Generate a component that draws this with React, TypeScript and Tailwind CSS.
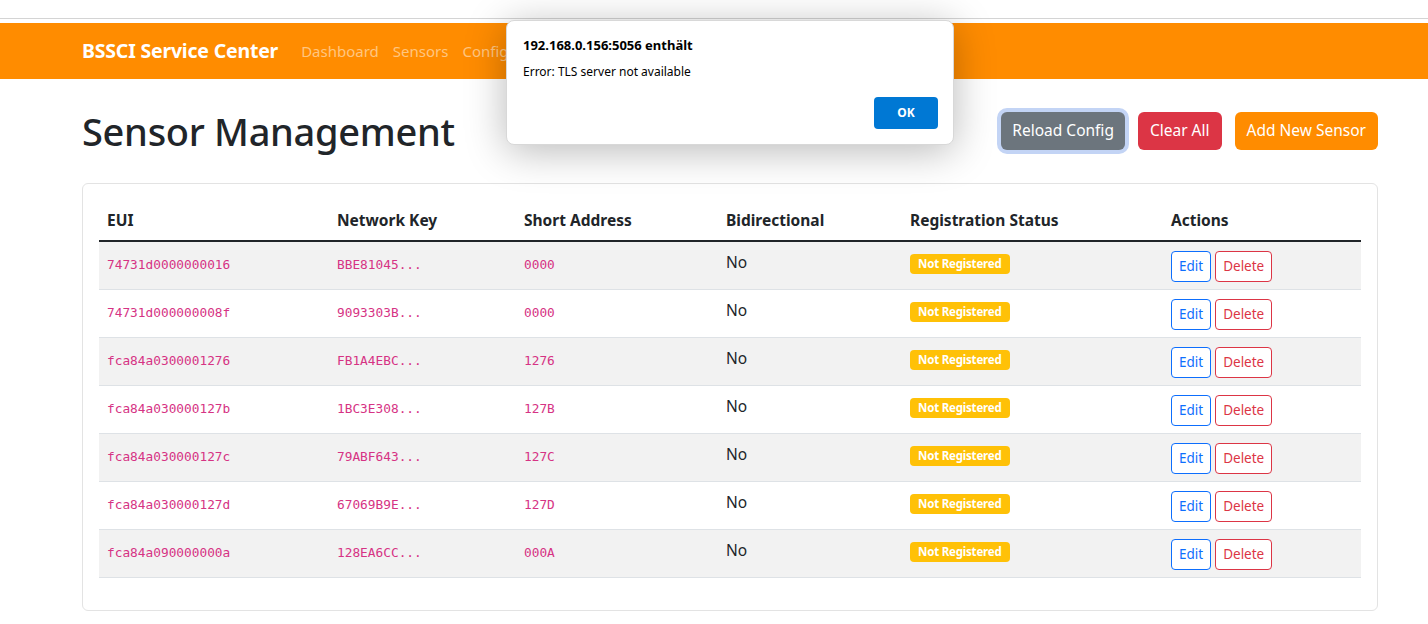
import React from "react";

const rows = [
  ["74731d0000000016", "BBE81045...", "0000"],
  ["74731d000000008f", "9093303B...", "0000"],
  ["fca84a0300001276", "FB1A4EBC...", "1276"],
  ["fca84a030000127b", "1BC3E308...", "127B"],
  ["fca84a030000127c", "79ABF643...", "127C"],
  ["fca84a030000127d", "67069B9E...", "127D"],
  ["fca84a090000000a", "128EA6CC...", "000A"],
];

const sans = { fontFamily: '"Noto Sans", "Open Sans", Arial, sans-serif' };

export default function App() {
  return (
    <div className="relative w-[1428px] h-[624px] overflow-hidden bg-white text-[#212529] font-['Noto_Sans',sans-serif]">
      <div className="h-[18px] bg-white" />
      <div className="h-px bg-[#d4d4d4]" />
      <div className="h-[4px] bg-white" />
      <nav className="h-[56px] bg-[#ff8c00] flex items-center pl-[82px]">
        <span className="text-white font-bold text-[19.5px] tracking-[-0.2px] mr-[23px]">BSSCI Service Center</span>
        <div className="flex gap-[14px] text-[15px] text-[#ffc680]">
          <span>Dashboard</span>
          <span>Sensors</span>
          <span>Configuration</span>
        </div>
      </nav>

      <div className="ml-[82px] w-[1296px]">
        <div className="mt-[28px] h-[48px] flex items-center justify-between">
          <h1 className="text-[38px] font-medium leading-[48px] tracking-[-0.3px]">Sensor Management</h1>
          <div className="flex items-center gap-[13px]">
            <button className="h-[38px] px-[11px] rounded-[6px] bg-[#6c757d] text-white text-[15.5px] ring-4 ring-[#c3d4f5]">Reload Config</button>
            <button className="h-[38px] px-[12px] rounded-[6px] bg-[#dc3545] text-white text-[15.5px]">Clear All</button>
            <button className="h-[38px] px-[12px] rounded-[6px] bg-[#ff8c00] text-white text-[15.5px]">Add New Sensor</button>
          </div>
        </div>

        <div className="mt-[28px] border border-[#e3e3e3] rounded-[6px] p-[16px] pb-[32px]">
          <table className="w-full border-collapse">
            <thead>
              <tr className="border-b-2 border-[#212529] text-left">
                <th className="w-[230px] px-[8px] py-[8px] font-bold text-[15.5px] leading-[24px]">EUI</th>
                <th className="w-[187px] px-[8px] py-[8px] font-bold text-[15.5px] leading-[24px]">Network Key</th>
                <th className="w-[202px] px-[8px] py-[8px] font-bold text-[15.5px] leading-[24px]">Short Address</th>
                <th className="w-[184px] px-[8px] py-[8px] font-bold text-[15.5px] leading-[24px]">Bidirectional</th>
                <th className="w-[261px] px-[8px] py-[8px] font-bold text-[15.5px] leading-[24px]">Registration Status</th>
                <th className="px-[8px] py-[8px] font-bold text-[15.5px] leading-[24px]">Actions</th>
              </tr>
            </thead>
            <tbody>
              {rows.map((r, i) => (
                <tr key={i} className={`h-[48px] border-b border-[#dee2e6] ${i % 2 === 0 ? "bg-[#f2f2f2]" : "bg-white"}`}>
                  <td className="px-[8px] pt-[9px] align-top">
                    <code className="font-['DejaVu_Sans_Mono',monospace] text-[12.8px] text-[#d63384]">{r[0]}</code>
                  </td>
                  <td className="px-[8px] pt-[9px] align-top">
                    <code className="font-['DejaVu_Sans_Mono',monospace] text-[12.8px] text-[#d63384]">{r[1]}</code>
                  </td>
                  <td className="px-[8px] pt-[9px] align-top">
                    <code className="font-['DejaVu_Sans_Mono',monospace] text-[12.8px] text-[#d63384]">{r[2]}</code>
                  </td>
                  <td className="px-[8px] pt-[8px] align-top text-[15.5px] leading-[24px]">No</td>
                  <td className="px-[8px] pt-[12px] align-top">
                    <span className="block w-fit bg-[#ffc107] text-white font-bold text-[11.5px] leading-[12px] px-[8px] pt-[4px] pb-[4px] rounded-[4px] tracking-[-0.2px]">Not Registered</span>
                  </td>
                  <td className="px-[8px] pt-[9px] align-top">
                    <div className="flex gap-[4px]">
                      <button className="h-[31px] px-[7px] border border-[#0d6efd] text-[#0d6efd] rounded-[4px] text-[13.5px] bg-white">Edit</button>
                      <button className="h-[31px] px-[7px] border border-[#dc3545] text-[#dc3545] rounded-[4px] text-[13.5px] bg-white">Delete</button>
                    </div>
                  </td>
                </tr>
              ))}
            </tbody>
          </table>
        </div>
      </div>

      <div className="absolute left-[506px] top-[20px] w-[448px] h-[125px] bg-white rounded-[8px] border border-[#d8d8d8] shadow-[0_6px_40px_rgba(0,0,0,0.28)]" style={sans}>
        <div className="pl-[16px] pt-[15px]">
          <div className="text-[13px] font-bold text-black leading-[18px]">192.168.0.156:5056 enthält</div>
          <div className="mt-[10px] text-[12px] text-black leading-[16px]">Error: TLS server not available</div>
        </div>
        <button className="absolute right-[15px] top-[76px] w-[64px] h-[32px] bg-[#0078d4] text-white text-[12px] font-bold rounded-[4px]">OK</button>
      </div>
    </div>
  );
}
